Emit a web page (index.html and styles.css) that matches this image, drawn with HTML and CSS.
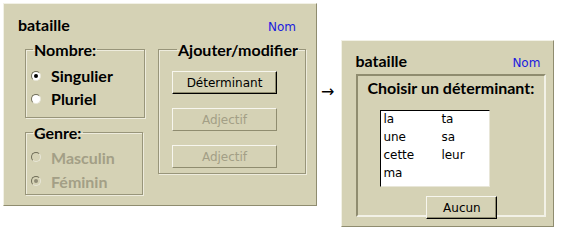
FILE: index.html
```html
<!DOCTYPE html>
<html lang="fr">
<head>
    <meta charset="UTF-8">
    <title>Déterminant</title>
    <link rel="stylesheet" href="styles.css">
</head>
<body>

<div class="scene">
    <div class="panel main">
        <div class="head">
            <span class="word">bataille</span>
            <span class="kind">Nom</span>
        </div>
        <div class="body">
            <div class="col">
                <fieldset class="group nombre">
                    <legend>Nombre:</legend>
                    <div class="radio"><span class="dot on"></span>Singulier</div>
                    <div class="radio"><span class="dot"></span>Pluriel</div>
                </fieldset>
                <fieldset class="group genre">
                    <legend>Genre:</legend>
                    <div class="radio off"><span class="dot"></span>Masculin</div>
                    <div class="radio off"><span class="dot on"></span>Féminin</div>
                </fieldset>
            </div>
            <fieldset class="group actions">
                <legend>Ajouter/modifier</legend>
                <button class="btn">Déterminant</button>
                <button class="btn" disabled>Adjectif</button>
                <button class="btn" disabled>Adjectif</button>
            </fieldset>
        </div>
    </div>

    <div class="arrow">→</div>

    <div class="panel popup">
        <div class="head">
            <span class="word">bataille</span>
            <span class="kind">Nom</span>
        </div>
        <div class="inset">
            <div class="title">Choisir un déterminant:</div>
            <div class="list">
                <span>la</span><span>ta</span>
                <span>une</span><span>sa</span>
                <span>cette</span><span>leur</span>
                <span>ma</span>
            </div>
            <button class="btn small">Aucun</button>
        </div>
    </div>
</div>

</body>
</html>
```

FILE: styles.css
```css
body {
    margin: 0;
    background: #fff;
    font-family: "DejaVu Sans", sans-serif;
    color: #000;
}
.scene {
    display: flex;
    align-items: flex-start;
    padding: 3px 0 0 3px;
}
.panel {
    background: #d5d2b5;
    border: 1px solid;
    border-color: #f2f1e6 #8f8c6f #8f8c6f #f2f1e6;
    box-sizing: border-box;
}
.main {
    width: 314px;
    height: 203px;
    padding: 11px 8px 0 14px;
}
.head {
    display: flex;
    justify-content: space-between;
    align-items: baseline;
}
.word, .title, .group legend, .radio {
    font-family: Lato, "DejaVu Sans", sans-serif;
    font-weight: bold;
}
.word {
    font-size: 16px;
}
.kind {
    color: #1a1adf;
    font-size: 12px;
}
.main .kind {
    margin-right: 12px;
}
.body {
    display: flex;
    gap: 13px;
    margin: 6px 0 0 7px;
}
.col {
    display: flex;
    flex-direction: column;
    gap: 5px;
}
.group {
    margin: 0;
    border: 1px solid #98957a;
    box-shadow: 1px 1px 0 #eeecdd, inset 1px 1px 0 #eeecdd;
    box-sizing: border-box;
}
.group legend {
    font-size: 16px;
    padding: 0 1px;
    margin-left: 2px;
}
.actions legend {
    margin-left: 5px;
}
.nombre {
    width: 120px;
    height: 78px;
    padding: 5px 0 0 5px;
}
.genre {
    width: 118px;
    height: 72px;
    padding: 3px 0 0 5px;
}
.radio {
    display: flex;
    align-items: center;
    font-size: 16px;
    height: 23px;
}
.radio.off {
    color: #a39f86;
    height: 24px;
}
.dot {
    width: 8px;
    height: 8px;
    border-radius: 50%;
    background: #fff;
    border: 1px solid;
    border-color: #6f6d58 #e8e6d8 #e8e6d8 #6f6d58;
    margin-right: 10px;
    position: relative;
}
.off .dot {
    background: #d5d2b5;
}
.dot.on::after {
    content: "";
    position: absolute;
    left: 2px;
    top: 2px;
    width: 4px;
    height: 4px;
    border-radius: 50%;
    background: #000;
}
.off .dot.on::after {
    background: #8f8c76;
}
.actions {
    width: 148px;
    height: 134px;
    padding: 12px 0 0 13px;
    display: flex;
    flex-direction: column;
    gap: 14px;
}
.btn {
    width: 105px;
    height: 23px;
    background: #d5d2b5;
    font-family: "DejaVu Sans", sans-serif;
    font-size: 12px;
    color: #000;
    border: 1px solid;
    border-color: #f7f6ee #000 #000 #f7f6ee;
    box-shadow: inset -1px -1px 0 #8f8c6f;
    padding: 0;
}
.btn:disabled {
    color: #a39f86;
    border-color: #f7f6ee #8f8c6f #8f8c6f #f7f6ee;
    box-shadow: none;
}
.arrow {
    font-size: 16px;
    margin: 79px 7px 0 4px;
}
.popup {
    width: 213px;
    height: 187px;
    margin-top: 37px;
    padding: 10px 13px 0 13px;
}
.inset {
    margin: 4px -6px 0 1px;
    border: 2px solid;
    border-color: #8f8c6f #f2f1e6 #f2f1e6 #8f8c6f;
    height: 143px;
    box-sizing: border-box;
    padding: 2px 0 0 9px;
}
.title {
    font-size: 16px;
    white-space: nowrap;
}
.list {
    margin: 13px 0 0 13px;
    width: 110px;
    height: 77px;
    box-sizing: border-box;
    background: #fff;
    border: 1px solid;
    border-color: #000 #e8e6d8 #e8e6d8 #000;
    display: grid;
    grid-template-columns: 58px auto;
    grid-auto-rows: 18px;
    padding: 1px 0 0 2px;
    font-size: 12px;
}
.btn.small {
    display: block;
    width: 71px;
    margin: 9px 0 0 59px;
}
```
